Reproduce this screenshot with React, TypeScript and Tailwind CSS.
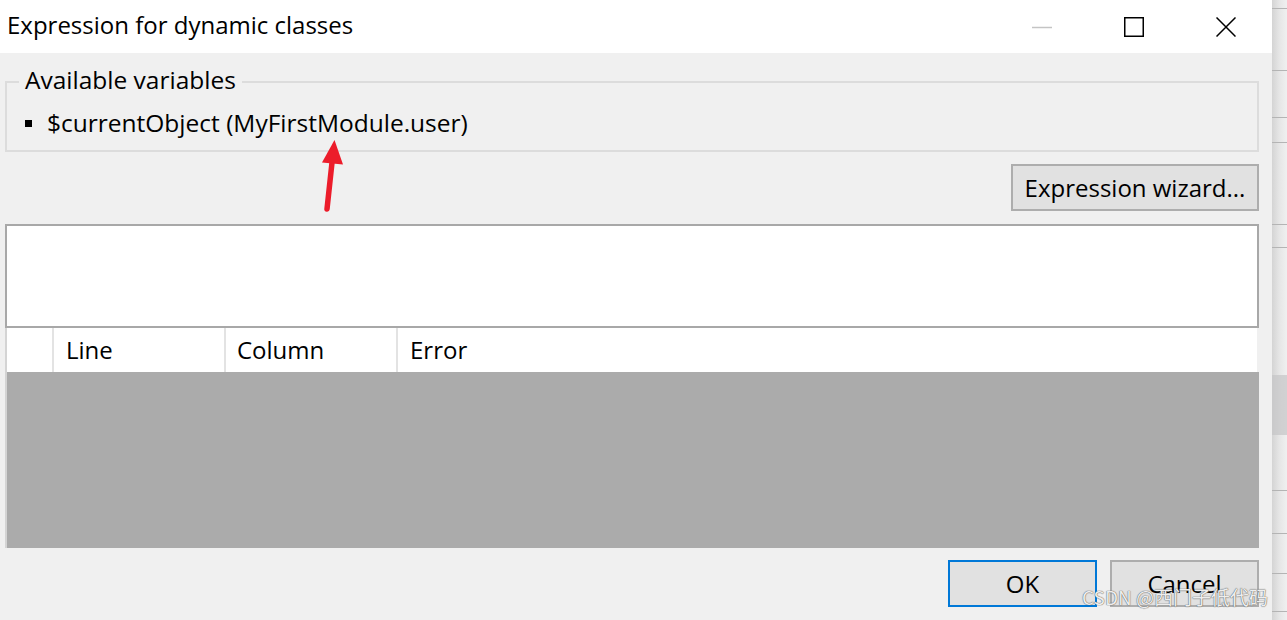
import React from 'react'

const FONT = { fontFamily: '"Open Sans", "Noto Sans", sans-serif' }

function Caption() {
  return (
    <div className="flex h-[53px] shrink-0 items-center justify-between bg-white pl-[7px]">
      <span className="mb-[3px] text-[24px] leading-none text-black">Expression for dynamic classes</span>
      <div className="flex h-full">
        <div className="flex h-full w-[92px] items-center justify-center">
          <svg width="20" height="20" viewBox="0 0 20 20">
            <line x1="0" y1="10.5" x2="20" y2="10.5" stroke="#c4c4c4" strokeWidth="1.5" />
          </svg>
        </div>
        <div className="flex h-full w-[92px] items-center justify-center">
          <svg width="20" height="20" viewBox="0 0 20 20">
            <rect x="0.75" y="0.75" width="18.5" height="18.5" fill="none" stroke="#000" strokeWidth="1.5" />
          </svg>
        </div>
        <div className="flex h-full w-[92px] items-center justify-center">
          <svg width="20" height="20" viewBox="0 0 20 20">
            <path d="M0.5 0.5 L19.5 19.5 M19.5 0.5 L0.5 19.5" stroke="#000" strokeWidth="1.5" />
          </svg>
        </div>
      </div>
    </div>
  )
}

function WinButton({ children, focused = false, className = '' }: { children: React.ReactNode; focused?: boolean; className?: string }) {
  return (
    <div
      className={`flex h-[47px] items-center justify-center border-2 bg-[#e1e1e1] text-[24px] leading-none text-black ${
        focused ? 'border-[#0078d7]' : 'border-[#adadad]'
      } ${className}`}
    >
      {children}
    </div>
  )
}

function SideStrip() {
  // peek of the window behind the dialog
  const lines = [8, 70, 117, 142, 224, 247, 490, 533, 573, 611]
  return (
    <div className="relative h-full w-[15px] bg-gradient-to-r from-[#d4d4d4] via-[#e6e6e6] to-[#f0f0f0]">
      <div className="absolute left-0 right-0 top-[375px] h-[60px] bg-[#c4c4c6]/70" />
      {lines.map((y) => (
        <div key={y} className="absolute left-0 right-0 h-px bg-[#b4b4b4]" style={{ top: y }} />
      ))}
    </div>
  )
}

export default function App() {
  return (
    <div className="relative flex h-[620px] w-[1287px] overflow-hidden bg-[#f0f0f0]" style={FONT}>
      <div className="flex w-[1272px] shrink-0 flex-col bg-[#f0f0f0]">
        <Caption />

        <div className="flex flex-col pl-[5px] pr-[13px]">
          <fieldset className="mt-[15px] border-2 border-[#dcdcdc] pb-[12px]">
            <legend className="ml-[12px] px-[6px] pb-[4px] text-[24.5px] leading-[24px] text-black">Available variables</legend>
            <div className="mt-[12px] flex h-[30px] items-center gap-[15px] pl-[18px] text-[24.5px] leading-none text-black">
              <span className="inline-block h-[7px] w-[7px] bg-black" />
              <span>$currentObject (MyFirstModule.user)</span>
            </div>
          </fieldset>

          <div className="mt-[12px] flex justify-end">
            <WinButton className="w-[248px]">Expression wizard...</WinButton>
          </div>

          <div className="mt-[13px] h-[104px] border-2 border-[#a8a8a8] bg-white" />

          <div className="flex flex-col border-l-2 border-[#d4d4d4]">
            <div className="flex h-[44px] bg-white text-[24px] leading-none text-black">
              <div className="w-[47px] shrink-0 border-r-2 border-[#e3e3e3]" />
              <div className="flex w-[172px] shrink-0 items-center border-r-2 border-[#e3e3e3] pl-[12px]">Line</div>
              <div className="flex w-[172px] shrink-0 items-center border-r-2 border-[#e3e3e3] pl-[11px]">Column</div>
              <div className="flex flex-1 items-center border-r-2 border-[#f0f0f0] pl-[12px]">Error</div>
            </div>
            <div className="h-[176px] bg-[#ababab]" />
          </div>

          <div className="mt-[12px] flex justify-end gap-[13px]">
            <WinButton focused className="w-[149px]">OK</WinButton>
            <WinButton className="w-[149px]">Cancel</WinButton>
          </div>
        </div>
      </div>

      <SideStrip />

      {/* red annotation arrow */}
      <svg className="pointer-events-none absolute left-0 top-0" width="1287" height="620">
        <line x1="327" y1="209" x2="332.5" y2="158" stroke="#ec1c2a" strokeWidth="5.5" strokeLinecap="round" />
        <polygon points="334.5,140 322,162.5 343,164.5" fill="#ec1c2a" />
      </svg>

      {/* watermark */}
      <span
        className="absolute left-[1082px] top-[587px] text-[19px] leading-none text-white/90 [text-shadow:0_0_1px_#555,0_0_1px_#555]"
        style={{ fontFamily: '"Noto Sans CJK SC", "Noto Sans", sans-serif' }}
      >
        CSDN @西门子低代码
      </span>
    </div>
  )
}
